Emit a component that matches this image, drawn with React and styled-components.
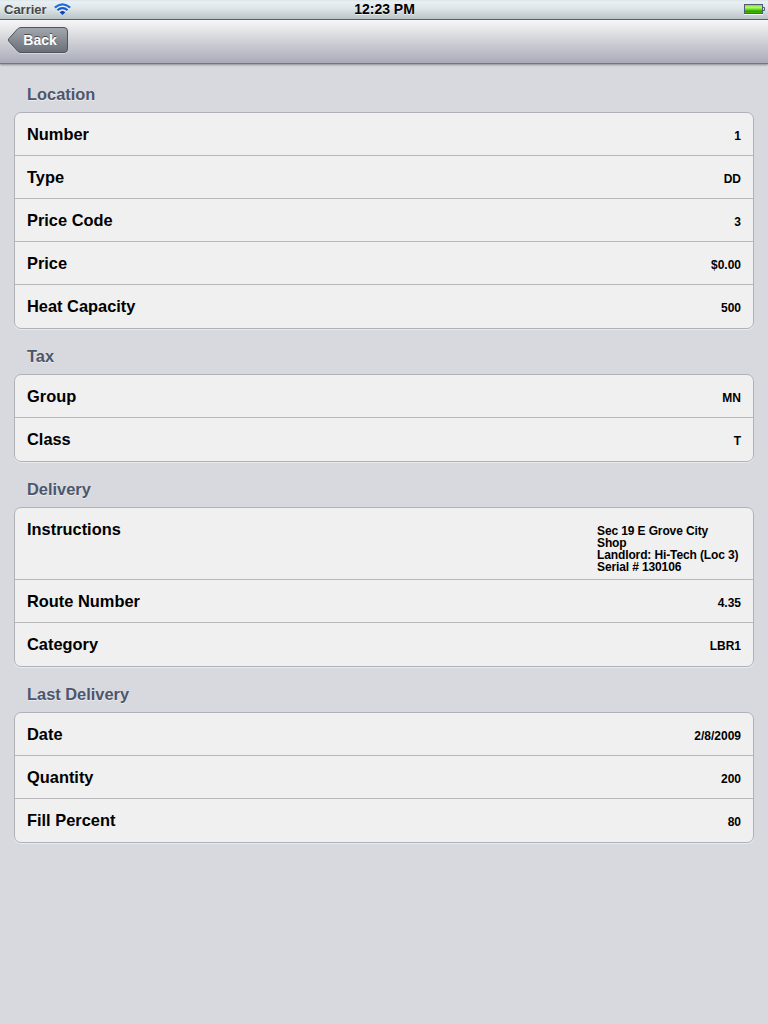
import styled, { createGlobalStyle } from 'styled-components'

const GlobalStyle = createGlobalStyle`
  body {
    margin: 0;
    background-color: #d8d9de;
    font-family: Arial, "Liberation Sans", sans-serif;
  }
`
const MainContainer = styled.div`
  min-height: 100vh;
  background-color: #d8d9de;
`
const StatusBar = styled.div`
  display: grid;
  grid-template-columns: 1fr auto 1fr;
  align-items: center;
  box-sizing: border-box;
  height: 20px;
  padding: 0 3px 1px 4px;
  border-bottom: 1px solid #5c6168;
  background: linear-gradient(#dce6e9 0, #e8f0f3 2px, #dbe4e6 9px, #b9c4c6 19px);
  text-shadow: 0 1px 0 rgba(255, 255, 255, 0.6);

  .carrier {
    display: flex;
    align-items: center;
    gap: 7px;
    color: #484848;
    font-size: 13px;
    font-weight: bold;
    line-height: 19px;
  }
  .clock {
    color: #000;
    font-size: 14px;
    font-weight: bold;
    line-height: 19px;
  }
  .battery {
    justify-self: end;
    display: block;
  }
`
const Toolbar = styled.div`
  display: flex;
  box-sizing: border-box;
  height: 44px;
  padding: 7px 7px 0;
  border-bottom: 1px solid #737582;
  background: linear-gradient(#f7f7f8, #d0d1d6 50%, #a9abba);
  box-shadow: 0 1px 2px rgba(0, 0, 0, 0.35);
`
const BackButton = styled.button`
  position: relative;
  width: 62px;
  height: 27px;
  padding: 0 0 1px 4px;
  border: none;
  background: none;
  color: #fff;
  font: bold 14px/26px Arial, "Liberation Sans", sans-serif;
  text-shadow: 0 -1px 0 rgba(0, 0, 0, 0.5);

  svg {
    position: absolute;
    top: 0;
    left: 0;
  }
  span {
    position: relative;
  }
`
const Content = styled.div`
  padding: 3px 14px;
`
const GroupTitle = styled.h2`
  box-sizing: border-box;
  height: 45px;
  margin: 0;
  padding: 17px 0 0 13px;
  color: #4c566c;
  font-size: 16.4px;
  line-height: 20px;
  text-shadow: 0 1px 0 rgba(255, 255, 255, 0.5);
`
const List = styled.ul`
  margin: 0;
  padding: 0;
  border: 1px solid #afb1b8;
  border-radius: 7px;
  background-color: #f0f0f0;
  box-shadow: 0 1px 0 rgba(255, 255, 255, 0.45);
  list-style: none;
`
const Row = styled.li`
  display: flex;
  justify-content: space-between;
  box-sizing: border-box;
  height: ${({ $tall }) => ($tall ? 72 : 43)}px;
  padding: 0 12px;
  border-bottom: 1px solid #b8b8bc;

  &:last-child {
    border-bottom: none;
  }
`
const Label = styled.span`
  color: #000;
  font-size: 16.4px;
  font-weight: bold;
  line-height: 43px;
`
const Value = styled.span`
  width: ${({ $tall }) => ($tall ? '144px' : 'auto')};
  padding-top: 17px;
  color: #000;
  font-size: 12px;
  font-weight: bold;
  line-height: 12px;
  letter-spacing: ${({ $tall }) => ($tall ? '-0.12px' : 'normal')};
  white-space: pre;
`

const groups = [
  {
    title: 'Location',
    rows: [
      { label: 'Number', value: '1' },
      { label: 'Type', value: 'DD' },
      { label: 'Price Code', value: '3' },
      { label: 'Price', value: '$0.00' },
      { label: 'Heat Capacity', value: '500' },
    ],
  },
  {
    title: 'Tax',
    rows: [
      { label: 'Group', value: 'MN' },
      { label: 'Class', value: 'T' },
    ],
  },
  {
    title: 'Delivery',
    rows: [
      {
        label: 'Instructions',
        value: 'Sec 19 E Grove City\nShop\nLandlord: Hi-Tech (Loc 3)\nSerial # 130106',
        tall: true,
      },
      { label: 'Route Number', value: '4.35' },
      { label: 'Category', value: 'LBR1' },
    ],
  },
  {
    title: 'Last Delivery',
    rows: [
      { label: 'Date', value: '2/8/2009' },
      { label: 'Quantity', value: '200' },
      { label: 'Fill Percent', value: '80' },
    ],
  },
]

const WifiIcon = () => (
  <svg width="17" height="13" viewBox="0 0 17 13" fill="none">
    <g stroke="#fff" strokeOpacity="0.7" strokeWidth="2" transform="translate(0 1)">
      <path d="M0.8 4.6 Q8.5 -2 16.2 4.6" />
      <path d="M3.4 7.3 Q8.5 2.9 13.6 7.3" />
    </g>
    <path d="M0.8 4.6 Q8.5 -2 16.2 4.6" stroke="#1a6cdf" strokeWidth="2.1" />
    <path d="M3.4 7.3 Q8.5 2.9 13.6 7.3" stroke="#125bd0" strokeWidth="2" />
    <path d="M5.7 9.2 Q8.5 6.8 11.3 9.2 L8.5 12 Z" fill="#0b43b4" />
  </svg>
)

const BatteryIcon = () => (
  <svg className="battery" width="21" height="11" viewBox="0 0 21 11">
    <defs>
      <linearGradient id="charge" x1="0" y1="0" x2="0" y2="1">
        <stop offset="0" stopColor="#6fd61e" />
        <stop offset="0.3" stopColor="#b5fa70" />
        <stop offset="0.5" stopColor="#7be52c" />
        <stop offset="0.75" stopColor="#279c00" />
        <stop offset="1" stopColor="#4dc410" />
      </linearGradient>
    </defs>
    <rect x="0.5" y="0.5" width="18" height="9" fill="url(#charge)" stroke="#525b73" />
    <path d="M19 3.5 h1.5 v3 h-1.5" fill="#e0e4ea" stroke="#525b73" />
    <path d="M0 10.5 h19" stroke="#f3f6f7" />
  </svg>
)

const ButtonShape = () => (
  <svg width="62" height="28" viewBox="0 0 62 28">
    <defs>
      <linearGradient id="steel" x1="0" y1="0" x2="0" y2="1">
        <stop offset="0" stopColor="#a4a8ae" />
        <stop offset="0.5" stopColor="#868b92" />
        <stop offset="1" stopColor="#696f78" />
      </linearGradient>
    </defs>
    <path
      d="M14 1.5 H57 Q60.5 1.5 60.5 5 V23 Q60.5 26.5 57 26.5 H14 Q12 26.5 10.5 25 L2 15.5 Q0.5 14 2 12.5 L10.5 3 Q12 1.5 14 1.5 Z"
      fill="none"
      stroke="rgba(255, 255, 255, 0.4)"
    />
    <path
      d="M14 0.5 H57 Q60.5 0.5 60.5 4 V22 Q60.5 25.5 57 25.5 H14 Q12 25.5 10.5 24 L2 14.5 Q0.5 13 2 11.5 L10.5 2 Q12 0.5 14 0.5 Z"
      fill="url(#steel)"
      stroke="#4f535c"
    />
  </svg>
)

export default function App() {
  return (
    <MainContainer>
      <GlobalStyle />
      <StatusBar>
        <div className="carrier">
          <span>Carrier</span>
          <WifiIcon />
        </div>
        <div className="clock">12:23 PM</div>
        <BatteryIcon />
      </StatusBar>
      <Toolbar>
        <BackButton>
          <ButtonShape />
          <span>Back</span>
        </BackButton>
      </Toolbar>
      <Content>
        {groups.map((group) => (
          <section key={group.title}>
            <GroupTitle>{group.title}</GroupTitle>
            <List>
              {group.rows.map((row) => (
                <Row key={row.label} $tall={row.tall}>
                  <Label>{row.label}</Label>
                  <Value $tall={row.tall}>{row.value}</Value>
                </Row>
              ))}
            </List>
          </section>
        ))}
      </Content>
    </MainContainer>
  )
}
